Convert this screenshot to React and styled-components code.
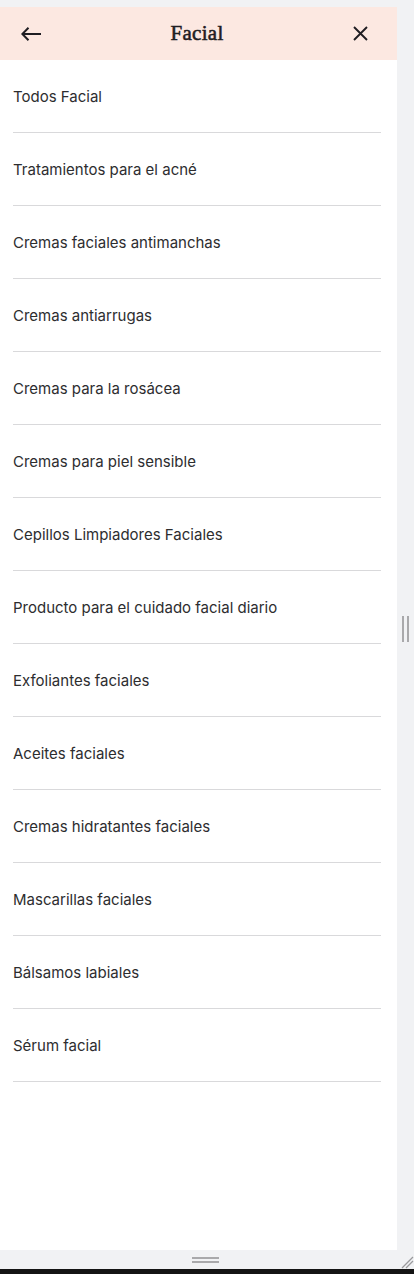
import React from 'react';
import styled, { createGlobalStyle } from 'styled-components';

const GlobalStyle = createGlobalStyle`
  html, body {
    margin: 0;
    padding: 0;
    background: #f1f2f4;
  }
  #root {
    width: 414px;
    height: 1274px;
    overflow: hidden;
  }
`;

const Frame = styled.div`
  display: flex;
  flex-direction: column;
  width: 414px;
  height: 1274px;
  background: #f1f2f4;
`;

const TopStrip = styled.div`
  height: 7px;
  flex-shrink: 0;
`;

const Middle = styled.div`
  display: flex;
  height: 1243px;
  flex-shrink: 0;
`;

const Panel = styled.div`
  width: 397px;
  background: #ffffff;
  display: flex;
  flex-direction: column;
`;

const Header = styled.div`
  height: 53px;
  background: #fce8e1;
  display: flex;
  align-items: center;
  justify-content: space-between;
  padding: 0 29px 0 21px;
`;

const IconButton = styled.button`
  border: none;
  background: none;
  padding: 0;
  margin: 0;
  display: flex;
  align-items: center;
  justify-content: center;
  width: ${p => p.$w}px;
  height: ${p => p.$h}px;
  cursor: pointer;
`;

const Title = styled.h1`
  margin: 0;
  font-family: "Liberation Serif", "DejaVu Serif", serif;
  font-size: 21px;
  font-weight: 400;
  -webkit-text-stroke: 0.55px #1f1d22;
  color: #1f1d22;
  letter-spacing: 0.3px;
`;

const List = styled.ul`
  list-style: none;
  margin: 0;
  padding: 0 16px 0 13px;
`;

const Item = styled.li`
  height: 72px;
  border-bottom: 1px solid #d9d9db;
  display: flex;
  align-items: center;
  font-family: Inter, "Noto Sans", sans-serif;
  font-size: 15px;
  color: #2d2d2f;
`;

const Gutter = styled.div`
  width: 17px;
  display: flex;
  align-items: center;
  justify-content: center;
`;

const VHandle = styled.div`
  display: flex;
  gap: 3px;
  span {
    display: block;
    width: 2px;
    height: 26px;
    background: #a9a9ab;
  }
`;

const BottomStrip = styled.div`
  position: relative;
  height: 19px;
  flex-shrink: 0;
  display: flex;
  align-items: center;
  justify-content: center;
  padding-right: 17px;
`;

const HHandle = styled.div`
  display: flex;
  flex-direction: column;
  gap: 2px;
  margin-left: 14px;
  span {
    display: block;
    width: 27px;
    height: 2px;
    background: #a9a9ab;
  }
`;

const Grip = styled.svg`
  position: absolute;
  right: 0;
  bottom: 0;
`;

const BlackBar = styled.div`
  height: 5px;
  background: #141414;
  flex-shrink: 0;
`;

const items = [
  'Todos Facial',
  'Tratamientos para el acné',
  'Cremas faciales antimanchas',
  'Cremas antiarrugas',
  'Cremas para la rosácea',
  'Cremas para piel sensible',
  'Cepillos Limpiadores Faciales',
  'Producto para el cuidado facial diario',
  'Exfoliantes faciales',
  'Aceites faciales',
  'Cremas hidratantes faciales',
  'Mascarillas faciales',
  'Bálsamos labiales',
  'Sérum facial',
];

export default function App() {
  return (
    <>
      <GlobalStyle />
      <Frame>
        <TopStrip />
        <Middle>
          <Panel>
            <Header>
              <IconButton $w={20} $h={14} aria-label="Atrás">
                <svg width="20" height="14" viewBox="0 0 20 14" fill="none">
                  <path d="M7.5 0.8 L1.3 7 L7.5 13.2 M1.3 7 H20" stroke="#1f1d22" strokeWidth="2" />
                </svg>
              </IconButton>
              <Title>Facial</Title>
              <IconButton $w={15} $h={15} aria-label="Cerrar">
                <svg width="15" height="15" viewBox="0 0 15 15" fill="none">
                  <path d="M1 1 L14 14 M14 1 L1 14" stroke="#1f1d22" strokeWidth="1.9" />
                </svg>
              </IconButton>
            </Header>
            <List>
              {items.map((t, i) => (
                <Item key={i}>{t}</Item>
              ))}
            </List>
          </Panel>
          <Gutter>
            <VHandle>
              <span />
              <span />
            </VHandle>
          </Gutter>
        </Middle>
        <BottomStrip>
          <HHandle>
            <span />
            <span />
          </HHandle>
          <Grip width="14" height="14" viewBox="0 0 14 14">
            <path d="M2 13 L13 2 M6 13 L13 6" stroke="#9a9a9c" strokeWidth="1.3" />
          </Grip>
        </BottomStrip>
        <BlackBar />
      </Frame>
    </>
  );
}
